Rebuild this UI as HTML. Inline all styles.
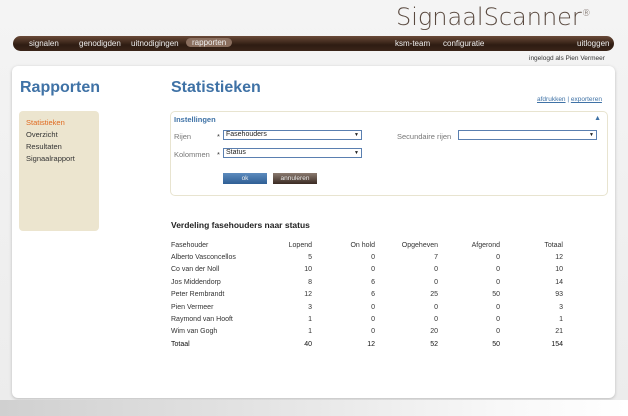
<!DOCTYPE html><html><head><meta charset="utf-8"><style>
*{margin:0;padding:0;box-sizing:border-box}
body{width:628px;height:416px;overflow:hidden;background:linear-gradient(#f4f4f4,#ececec);font-family:"Liberation Sans",sans-serif;font-size:7.5px;color:#333;position:relative}
.a{position:absolute}
.logo{left:396px;top:3px;font-family:"DejaVu Sans",sans-serif;font-weight:200;font-size:24px;color:#5a4a40;letter-spacing:0px}
.nav{left:13px;top:36px;width:601px;height:15px;border-radius:8px;background:linear-gradient(#6a4a38,#2e1c12 60%,#3a2418);color:#eee;font-size:8px}
.nav span{position:absolute;top:2.5px}
.panel{left:12px;top:66px;width:603px;height:332px;background:#fff;border-radius:6px;box-shadow:0 1px 3px #bbb}
h1{position:absolute;font-size:16px;color:#3f72a6;font-weight:bold}
.side{left:19px;top:111px;width:80px;height:120px;background:#ece5cf;border-radius:4px}
.side div{position:absolute;left:7px}
.box{left:170px;top:111px;width:438px;height:85px;border:1px solid #e8e4d0;border-radius:5px}
.sel{position:absolute;height:10px;border:1px solid #5a7fb0;background:#fff;font-size:7px;padding-left:2px;line-height:8px;color:#222}
.sel:after{content:"▼";position:absolute;right:2px;top:0;font-size:5px}
.btn{position:absolute;height:11px;color:#eee;text-align:center;line-height:11px;font-size:6.5px}
table{position:absolute;left:171px;top:239px;border-collapse:collapse;font-size:7px;color:#333}
td{height:12.4px;text-align:right;padding:0}
td:first-child{text-align:left;width:70px}
.bottom{left:0;top:400px;width:628px;height:16px;background:linear-gradient(90deg,#d0d0d0,#e8e8e8 50%,#f8f8f8 80%,#fff)}
</style></head><body>
<div class="a logo">SignaalScanner<sup style="font-size:9px">®</sup></div>
<div class="a nav">
<span style="left:16px">signalen</span><span style="left:66px">genodigden</span><span style="left:118px">uitnodigingen</span>
<span style="left:173px;top:2px;background:#8a6e5e;border-radius:6px;padding:0 6px">rapporten</span>
<span style="left:382px">ksm-team</span><span style="left:430px">configuratie</span><span style="left:564px">uitloggen</span></div>
<div class="a" style="left:529px;top:55px;font-size:6.5px">ingelogd als Pien Vermeer</div>
<div class="a panel"></div>
<h1 style="left:20px;top:79px">Rapporten</h1>
<h1 style="left:171px;top:79px">Statistieken</h1>
<div class="a" style="left:537px;top:96px;font-size:6.5px;color:#3f72a6"><u>afdrukken</u> | <u>exporteren</u></div>
<div class="a side"><div style="top:7px;color:#e06a20">Statistieken</div><div style="top:19px">Overzicht</div><div style="top:31px">Resultaten</div><div style="top:43px">Signaalrapport</div></div>
<div class="a box">
<div class="a" style="left:3px;top:3px;color:#3f72a6;font-weight:bold;font-size:7.5px">Instellingen</div>
<div class="a" style="right:6px;top:3px;color:#3f72a6;font-size:7px">▲</div>
<div class="a" style="left:3px;top:20px;color:#777">Rijen</div><div class="a" style="left:46px;top:20px">*</div>
<div class="sel" style="left:52px;top:18px;width:139px">Fasehouders</div>
<div class="a" style="left:226px;top:20px;color:#777">Secundaire rijen</div>
<div class="sel" style="left:287px;top:18px;width:139px"></div>
<div class="a" style="left:3px;top:38px;color:#777">Kolommen</div><div class="a" style="left:46px;top:38px">*</div>
<div class="sel" style="left:52px;top:36px;width:139px">Status</div>
<div class="btn" style="left:52px;top:61px;width:44px;background:linear-gradient(#5d8bbd,#2f5f95)">ok</div>
<div class="btn" style="left:102px;top:61px;width:44px;background:linear-gradient(#8a7a70,#3a2a22)">annuleren</div>
</div>
<div class="a" style="left:171px;top:220px;font-size:8.5px;font-weight:bold;color:#222">Verdeling fasehouders naar status</div>
<table>
<tr><td>Fasehouder</td><td style="width:71px">Lopend</td><td style="width:63px">On hold</td><td style="width:63px">Opgeheven</td><td style="width:62px">Afgerond</td><td style="width:63px">Totaal</td></tr>
<tr><td>Alberto Vasconcellos</td><td>5</td><td>0</td><td>7</td><td>0</td><td>12</td></tr>
<tr><td>Co van der Noll</td><td>10</td><td>0</td><td>0</td><td>0</td><td>10</td></tr>
<tr><td>Jos Middendorp</td><td>8</td><td>6</td><td>0</td><td>0</td><td>14</td></tr>
<tr><td>Peter Rembrandt</td><td>12</td><td>6</td><td>25</td><td>50</td><td>93</td></tr>
<tr><td>Pien Vermeer</td><td>3</td><td>0</td><td>0</td><td>0</td><td>3</td></tr>
<tr><td>Raymond van Hooft</td><td>1</td><td>0</td><td>0</td><td>0</td><td>1</td></tr>
<tr><td>Wim van Gogh</td><td>1</td><td>0</td><td>20</td><td>0</td><td>21</td></tr>
<tr style="color:#111"><td>Totaal</td><td>40</td><td>12</td><td>52</td><td>50</td><td>154</td></tr>
</table>
<div class="a bottom"></div>
</body></html>
